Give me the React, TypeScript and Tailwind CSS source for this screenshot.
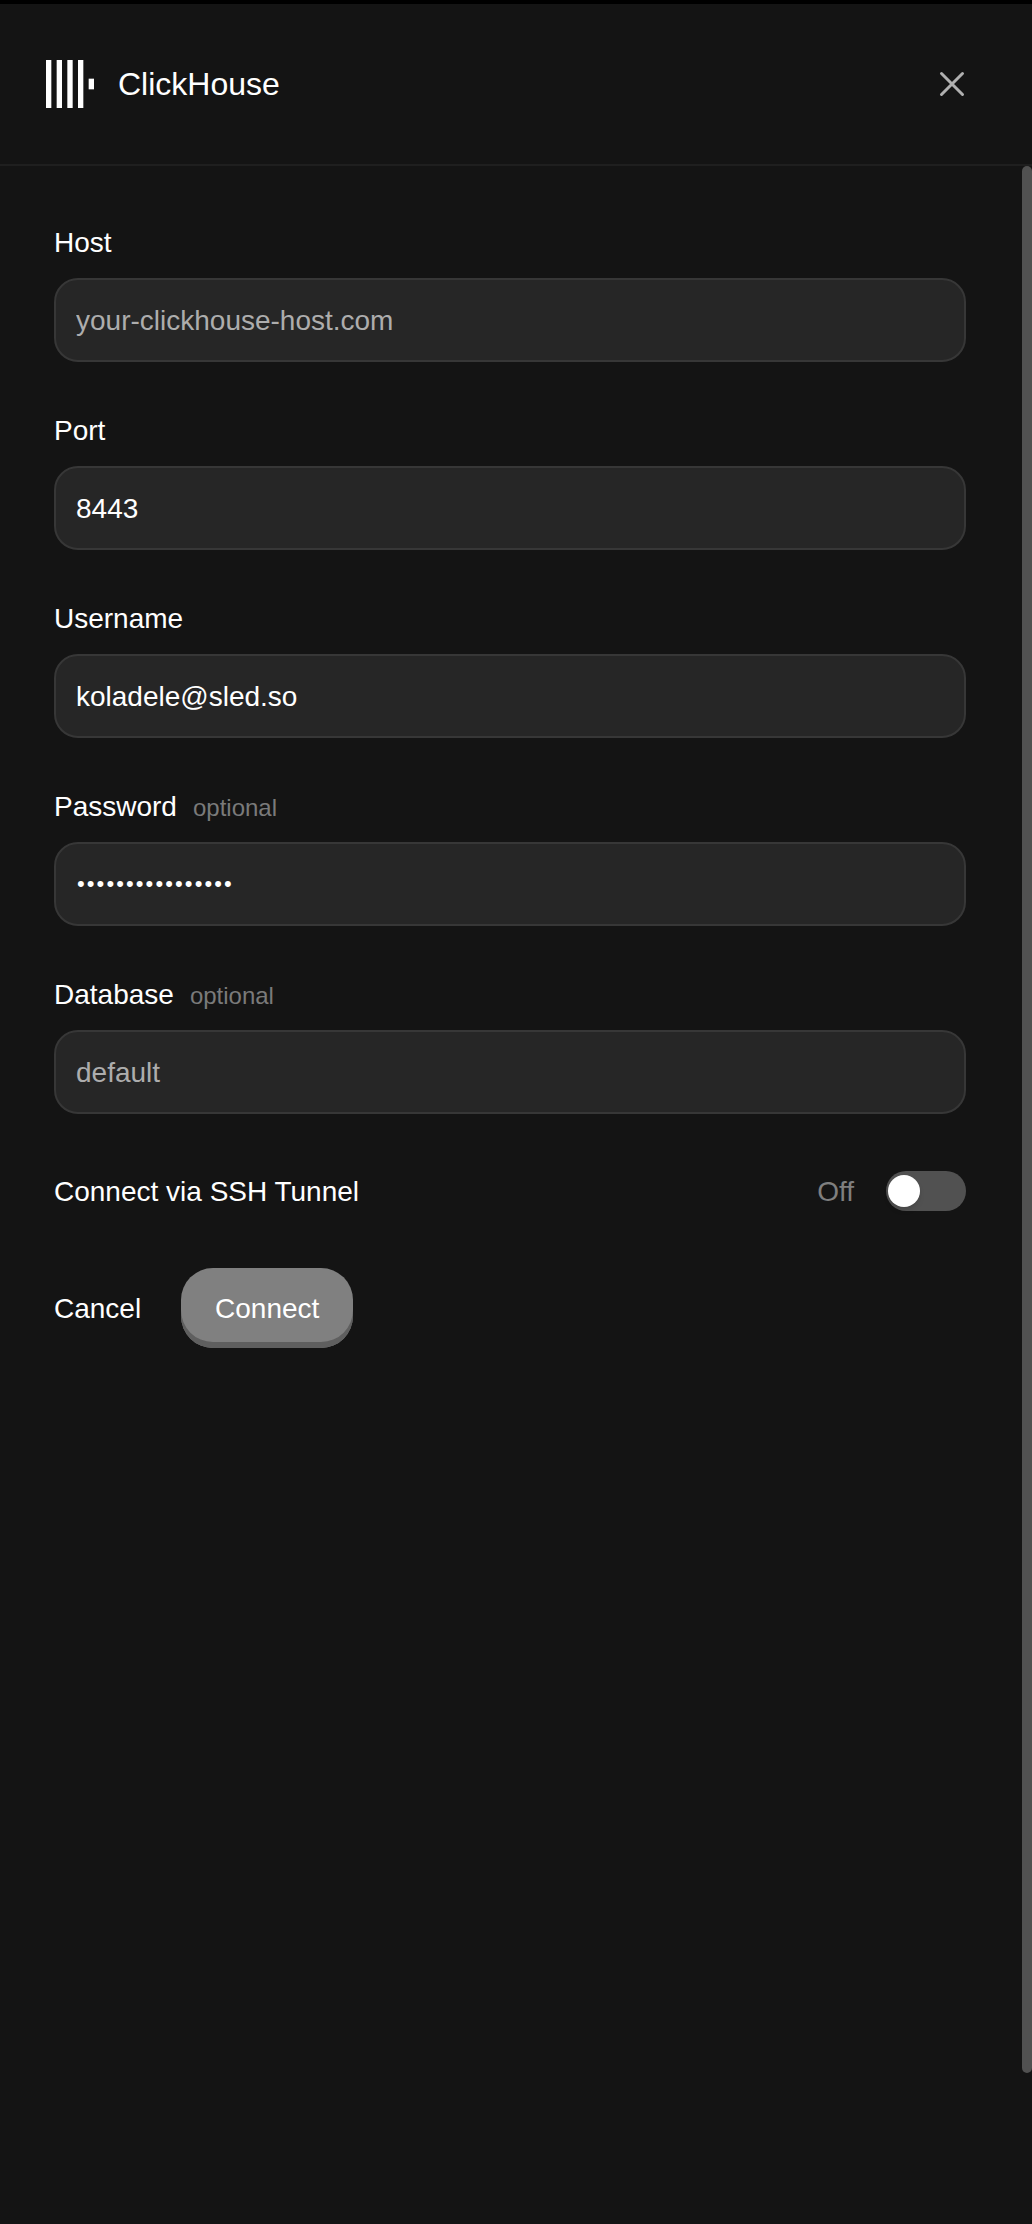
import React from 'react';

type FieldProps = {
  id: string;
  label: string;
  optional?: boolean;
  type?: 'text' | 'password';
  placeholder?: string;
  value?: string;
};

function Field({ id, label, optional, type = 'text', placeholder, value }: FieldProps) {
  const textStyle = type === 'password' ? 'pl-[21px] pr-5 text-[22px] tracking-[2.1px]' : 'px-5 pt-0.5 text-[28px]';
  return (
    <div className="flex flex-col">
      <label htmlFor={id} className="flex h-8 items-baseline gap-4 text-[28px] leading-8">
        <span>{label}</span>
        {optional && <span className="text-2xl leading-8 text-[#7a7a7a]">optional</span>}
      </label>
      <input
        id={id}
        type={type}
        placeholder={placeholder}
        defaultValue={value}
        className={`mt-[19px] h-[84px] w-full rounded-3xl border-2 border-[#373737] bg-[#262626] text-white outline-none placeholder:text-[#adadad] ${textStyle}`}
      />
    </div>
  );
}

function Logo() {
  return (
    <svg viewBox="0 0 9 9" className="h-12 w-12 fill-white" aria-hidden="true">
      <rect x="0" width="1" height="9" />
      <rect x="2" width="1" height="9" />
      <rect x="4" width="1" height="9" />
      <rect x="6" width="1" height="9" />
      <rect x="8" y="3.5" width="1" height="2" />
    </svg>
  );
}

export default function App() {
  return (
    <div className="flex h-[2224px] w-[1032px] flex-col overflow-hidden border-t-4 border-black bg-[#141414] font-['Liberation_Sans',Arial,sans-serif] text-white">
      <header className="flex h-[162px] shrink-0 items-center justify-between border-b-2 border-[#1f1f1f] pr-[66px] pl-[46px]">
        <div className="flex items-center gap-6">
          <Logo />
          <h1 className="text-[32px] leading-10">ClickHouse</h1>
        </div>
        <button type="button" aria-label="Close">
          <svg viewBox="0 0 28 28" className="h-7 w-7" fill="none" stroke="#b0b0b0" strokeWidth="3" strokeLinecap="round">
            <path d="M3.5 3.5 24.5 24.5M24.5 3.5 3.5 24.5" />
          </svg>
        </button>
      </header>

      <div className="flex flex-1 justify-between">
        <form className="flex w-[966px] flex-col pt-[61px] pl-[54px]">
          <div className="flex flex-col gap-[53px]">
            <Field id="host" label="Host" placeholder="your-clickhouse-host.com" />
            <Field id="port" label="Port" value="8443" />
            <Field id="username" label="Username" value="koladele@sled.so" />
            <Field id="password" label="Password" optional type="password" value="abcdefghijklmnop" />
            <Field id="database" label="Database" optional placeholder="default" />
          </div>

          <div className="mt-[57px] flex h-10 items-center justify-between text-[28px]">
            <span className="pt-0.5">Connect via SSH Tunnel</span>
            <div className="flex items-center gap-8">
              <span className="pt-0.5 text-[#7f7f7f]">Off</span>
              <button type="button" role="switch" aria-checked="false" aria-label="SSH tunnel" className="flex h-10 w-20 items-center rounded-full bg-[#515151] pl-0.5">
                <span className="h-8 w-8 rounded-full bg-white shadow-md" />
              </button>
            </div>
          </div>

          <div className="mt-[57px] flex h-20 items-center gap-10 text-[28px]">
            <button type="button" className="pt-0.5">Cancel</button>
            <button type="button" className="h-20 w-[172px] rounded-[32px] bg-[#808080] pt-0.5 shadow-[inset_0_-6px_0_#5f5f5f]">
              Connect
            </button>
          </div>
        </form>
        <div className="h-[1907px] w-2.5 rounded-full bg-[#515151]" />
      </div>
    </div>
  );
}
